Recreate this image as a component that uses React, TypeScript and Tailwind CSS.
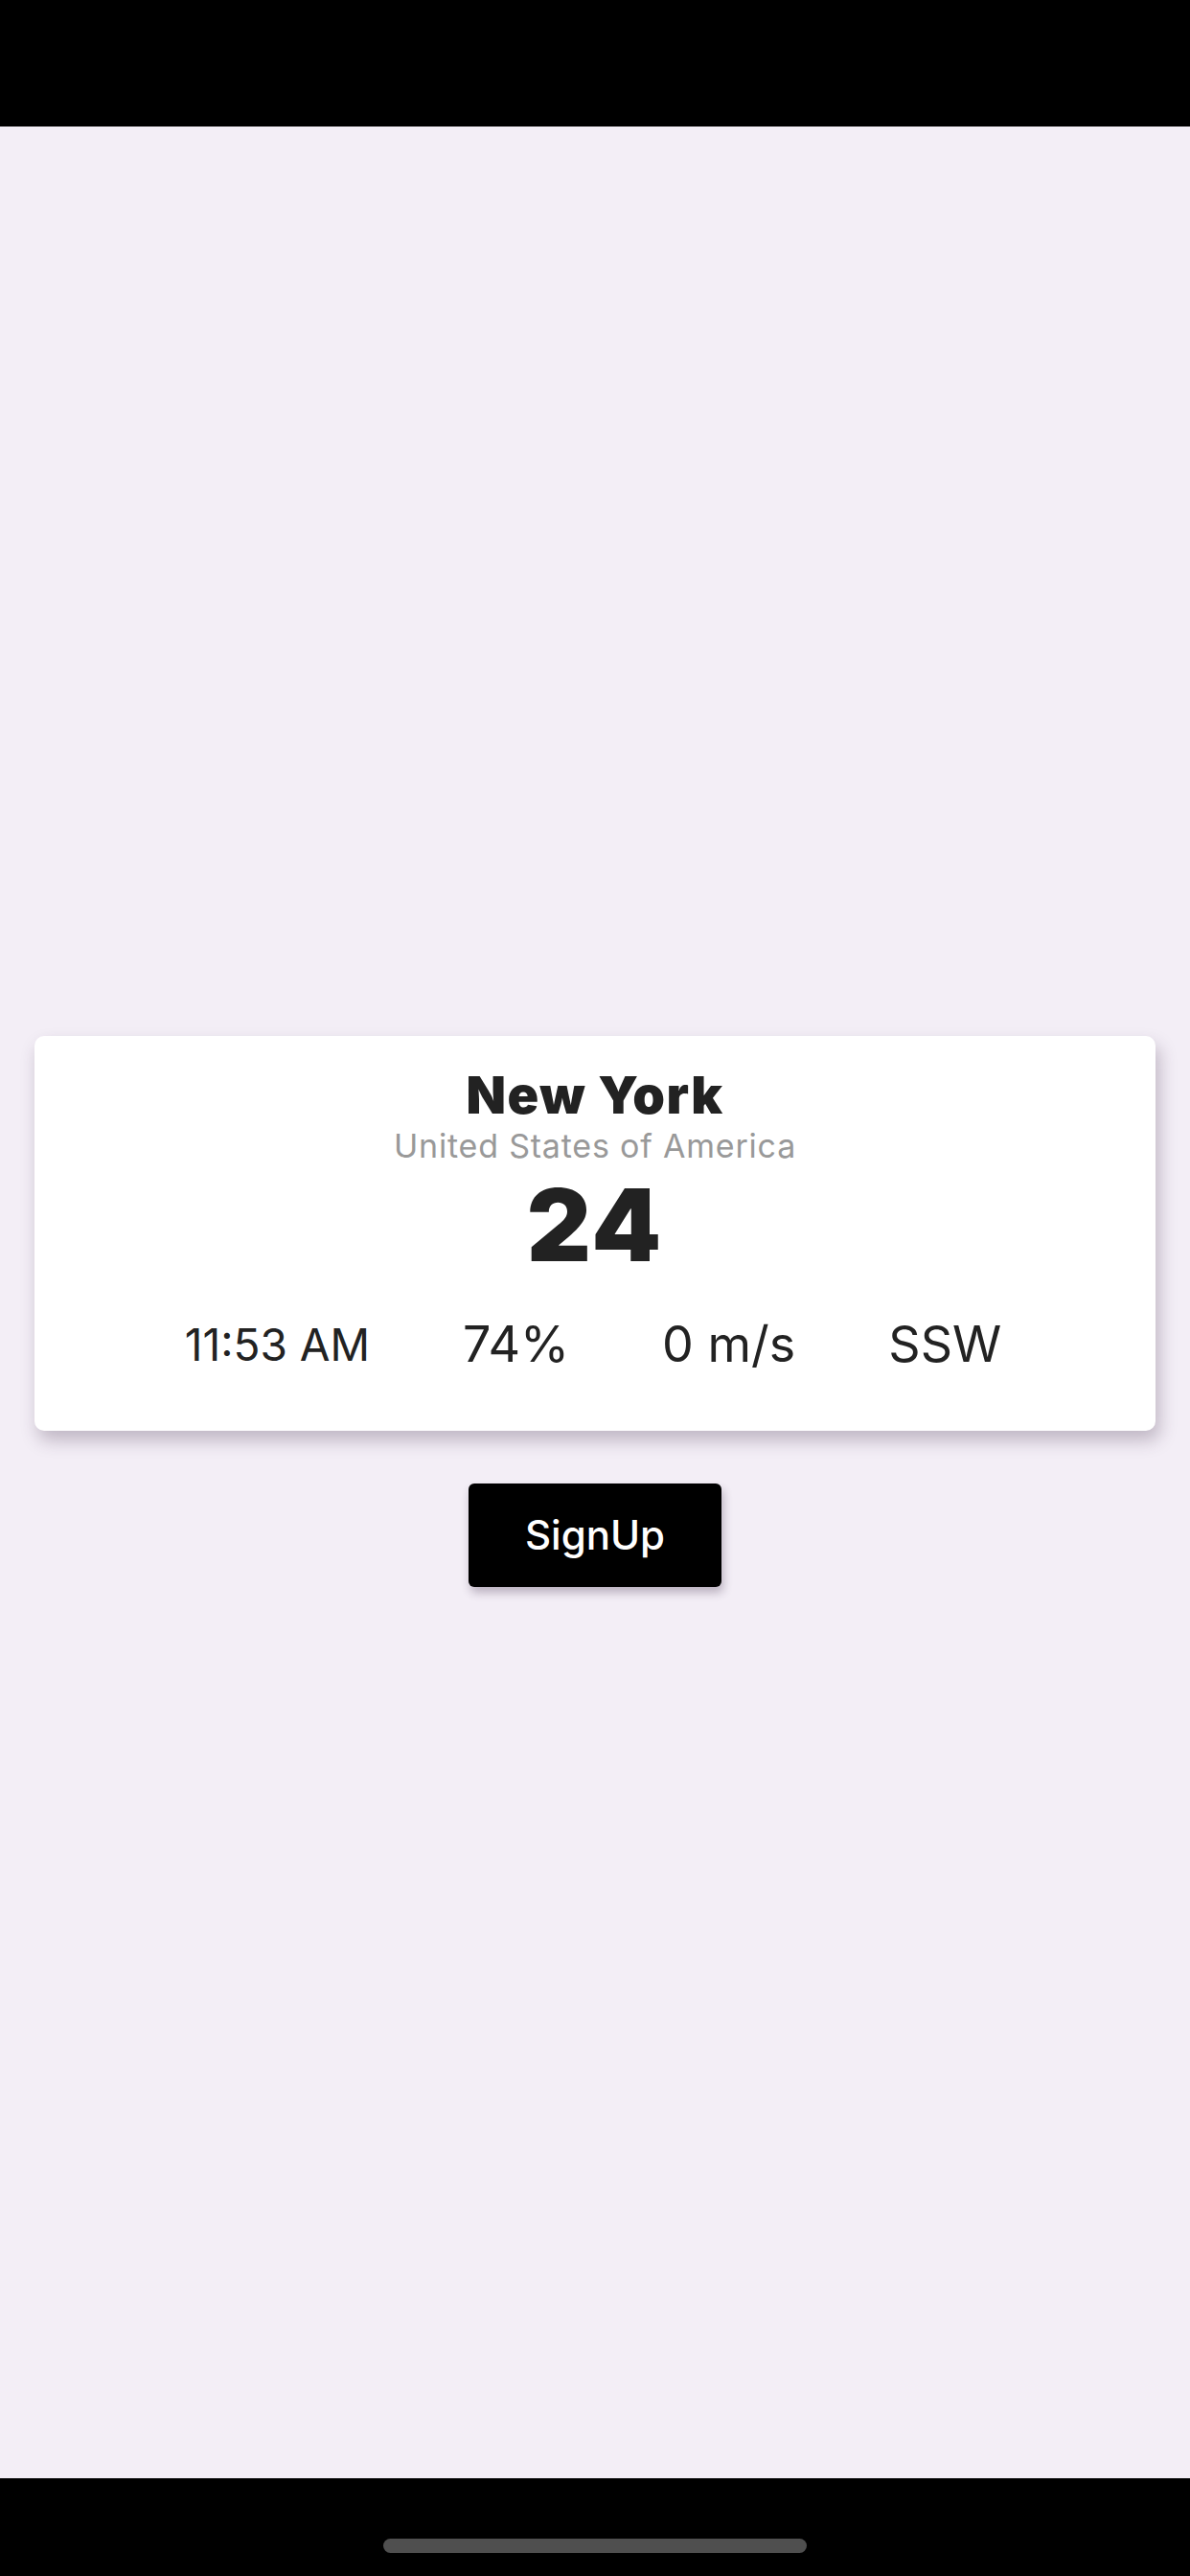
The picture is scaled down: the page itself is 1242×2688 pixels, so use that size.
import React from "react";

export default function App() {
  return (
    <div
      className="flex h-[2688px] w-[1242px] flex-col bg-[#f3eef6]"
      style={{ fontFamily: "Inter, 'Noto Sans', sans-serif" }}
    >
      <div className="h-[132px] w-full shrink-0 bg-black" />
      <main className="flex flex-1 flex-col items-center justify-center pt-[18px]">
        <div className="flex w-[1170px] flex-col items-center rounded-[10px] bg-white pb-[64px] pt-[35px] shadow-[4px_10px_18px_rgba(60,40,70,0.28)]">
          <div className="text-[54px] font-black leading-[54px] tracking-[1.5px] text-[#222222]">New York</div>
          <div className="mt-[9px] text-[34px] font-normal leading-[34px] tracking-[0.8px] text-[#999999]">
            United States of America
          </div>
          <div className="mt-[13px] text-[104px] font-black leading-[104px] tracking-[2px] text-[#222222]">24</div>
          <div className="mt-[47px] flex items-center justify-center gap-[97px] pr-[4px] text-[#222222]">
            <span className="text-[46px] leading-[52px]">11:53 AM</span>
            <span className="text-[52px] leading-[52px]">74%</span>
            <span className="text-[52px] leading-[52px]">0 m/s</span>
            <span className="text-[52px] leading-[52px]">SSW</span>
          </div>
        </div>
        <button className="mt-[55px] flex h-[108px] w-[264px] items-center justify-center rounded-[6px] bg-black text-[42px] font-medium text-white shadow-[2px_6px_10px_rgba(60,40,70,0.3)]">
          SignUp
        </button>
      </main>
      <div className="flex h-[102px] w-full shrink-0 items-start justify-center bg-black pt-[63px]">
        <div className="h-[15px] w-[442px] rounded-full bg-[#4f4f4f]" />
      </div>
    </div>
  );
}
